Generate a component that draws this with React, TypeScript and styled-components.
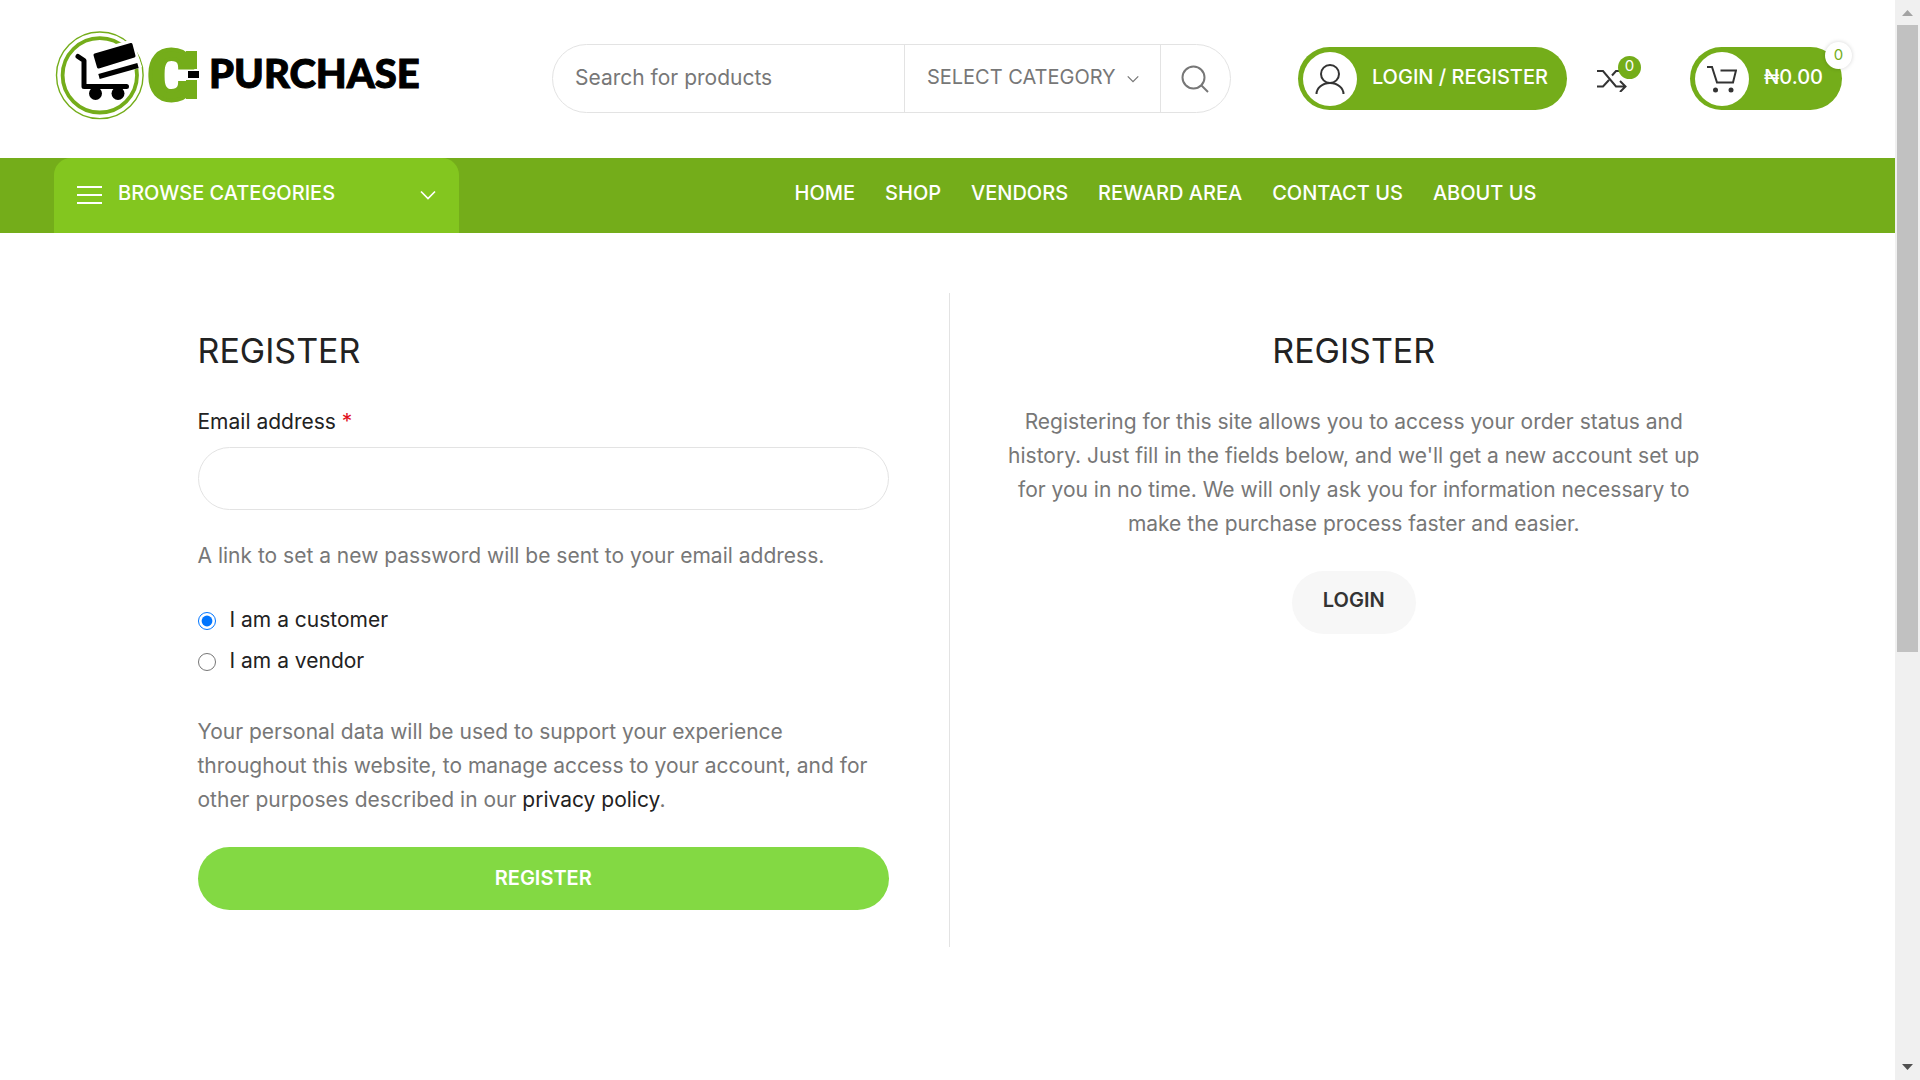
import React from "react";
import styled, { createGlobalStyle } from "styled-components";

const green = "#74ad1a";
const sans = `Inter, "Noto Sans", sans-serif`;

const GlobalStyle = createGlobalStyle`
  * { box-sizing: border-box; }
  html { overflow: hidden; }
  body { margin: 0; background: #fff; color: #777; font: 21px/34px ${sans}; }
  button, input, select { font: inherit; }
  a { color: inherit; text-decoration: none; }
  h2, p { margin: 0; }
  svg { display: block; flex: none; }
`;

const Page = styled.div`
  display: flex;
  height: 100vh;
`;

const Content = styled.div`
  flex: 1;
  min-width: 0;
  overflow: hidden;
`;

const Header = styled.header`
  display: flex;
  align-items: center;
  height: 158px;
  padding: 0 53px 1px 54px;
`;

const Logo = styled.a`
  flex: none;
  margin: 0 122px 8px 0;
`;

const Search = styled.form`
  display: flex;
  flex: 1;
  height: 69px;
  border: 1px solid #e3e3e3;
  border-radius: 35px;
  overflow: hidden;
`;

const SearchInput = styled.input`
  flex: 1;
  min-width: 0;
  padding: 0 22px 2px;
  border: 0;
  background: none;
  color: #777;
  outline: 0;
  &::placeholder { color: #777; opacity: 1; }
`;

const CategoryBox = styled.label`
  display: flex;
  align-items: center;
  width: 257px;
  padding: 0 21px 0 22px;
  border-left: 1px solid #e3e3e3;
  border-right: 1px solid #e3e3e3;
`;

const CategorySelect = styled.select`
  flex: 1;
  min-width: 0;
  padding: 0 0 4px;
  border: 0;
  appearance: none;
  background: none;
  color: #777;
  font-size: 20px;
`;

const SearchButton = styled.button`
  display: grid;
  place-items: center;
  width: 69px;
  padding: 0;
  border: 0;
  background: none;
`;

const Tools = styled.div`
  display: flex;
  align-items: center;
  margin-left: 67px;
`;

const Pill = styled.a`
  position: relative;
  display: flex;
  align-items: center;
  height: 63px;
  padding: 0 19px 4px 74px;
  border-radius: 32px;
  background: ${green};
  color: #fff;
  font-size: 20px;
  font-weight: 500;
  white-space: nowrap;
`;

const PillIcon = styled.span`
  position: absolute;
  left: 5px;
  top: 5px;
  display: grid;
  place-items: center;
  width: 54px;
  height: 54px;
  border-radius: 50%;
  background: #fff;
`;

const Compare = styled.a`
  position: relative;
  margin: 0 63px 0 30px;
`;

const Badge = styled.span<{ $light?: boolean }>`
  position: absolute;
  top: ${p => (p.$light ? "-5px" : "-10px")};
  right: ${p => (p.$light ? "-10px" : "-14px")};
  width: ${p => (p.$light ? 27 : 23)}px;
  height: ${p => (p.$light ? 27 : 23)}px;
  border-radius: 50%;
  background: ${p => (p.$light ? "#fff" : green)};
  color: ${p => (p.$light ? green : "#fff")};
  box-shadow: ${p => (p.$light ? "0 0 4px rgba(0, 0, 0, 0.17)" : "none")};
  font-size: 15px;
  font-weight: 400;
  line-height: ${p => (p.$light ? 25 : 20)}px;
  text-align: center;
`;

const NavBar = styled.div`
  display: flex;
  height: 75px;
  padding: 0 53px 0 54px;
  background: ${green};
  color: #fff;
  font-size: 20px;
  font-weight: 500;
`;

const Browse = styled.button`
  display: flex;
  align-items: center;
  gap: 16px;
  width: 405px;
  padding: 0 23px 2px;
  border: 0;
  border-radius: 17px 17px 0 0;
  background: #83c61f;
  color: #fff;
`;

const BrowseLabel = styled.span`
  flex: 1;
  padding-bottom: 4px;
  text-align: left;
`;

const Menu = styled.nav`
  display: flex;
  flex: 1;
  align-items: center;
  justify-content: center;
  gap: 30px;
  margin-left: 30px;
  padding-bottom: 5px;
  white-space: nowrap;
`;

const Main = styled.main`
  display: flex;
  max-width: 1504px;
  margin: 60px auto 0;
`;

const Column = styled.section`
  flex: 1;
  padding: 37px 0 37px 58px;
  border-left: 1px solid #e3e3e3;
  text-align: center;
  &:first-child {
    padding: 37px 60px 37px 2px;
    border-left: 0;
    text-align: left;
  }
`;

const Title = styled.h2`
  margin-bottom: 33px;
  color: #222;
  font-size: 34px;
  font-weight: 400;
  line-height: 42px;
`;

const FieldLabel = styled.label`
  display: block;
  margin-bottom: 8px;
  color: #222;
`;

const Required = styled.span`
  color: #e01020;
`;

const TextField = styled.input`
  display: block;
  width: 100%;
  height: 63px;
  margin-bottom: 29px;
  padding: 0 22px;
  border: 1px solid #e3e3e3;
  border-radius: 32px;
`;

const Choices = styled.fieldset`
  margin: 27px 0 33px;
  padding: 0;
  border: 0;
`;

const Choice = styled.label`
  display: flex;
  align-items: center;
  gap: 14px;
  height: 41px;
  color: #222;
`;

const ChoiceText = styled.span`
  padding-bottom: 2px;
`;

const Radio = styled.input`
  width: 18px;
  height: 18px;
  margin: 0;
  accent-color: #0075ff;
`;

const PolicyLink = styled.a`
  color: #222;
`;

const SubmitButton = styled.button`
  width: 100%;
  height: 63px;
  margin-top: 30px;
  padding: 0 0 2px;
  border: 0;
  border-radius: 32px;
  background: #83d943;
  color: #fff;
  font-size: 20px;
  font-weight: 600;
`;

const LoginLink = styled.a`
  display: inline-block;
  height: 63px;
  margin-top: 30px;
  padding: 0 31px;
  border-radius: 32px;
  background: #f7f7f7;
  color: #333;
  font-size: 20px;
  font-weight: 600;
  line-height: 59px;
`;

const Scrollbar = styled.div`
  display: flex;
  flex-direction: column;
  justify-content: space-between;
  align-items: center;
  width: 25px;
  background: #f0f0f0;
`;

const Thumb = styled.div`
  width: 21px;
  height: 627px;
  margin: 9px 0 auto;
  background: #c1c1c1;
`;

const Chevron = ({ size, color }: { size: number; color: string }) => (
  <svg width={size} height={size} viewBox="0 0 16 16" fill="none" stroke={color} strokeWidth="1.7">
    <path d="M1 4.5 8 11.5 15 4.5" />
  </svg>
);

const LogoArt = () => (
  <svg width="376" height="92" viewBox="54 28 376 92">
    <g fill="none" stroke={green}>
      <circle cx="99.8" cy="74.3" r="43.3" strokeWidth="1.4" />
      <circle cx="99.8" cy="74.3" r="37.2" strokeWidth="3.8" />
    </g>
    <path d="M92 50 133 38 142 66 100 80Z" fill="#fff" />
    <g stroke="#000" strokeLinejoin="round" strokeLinecap="round">
      <path d="M78 55.500 84 59.500V85.500H126.500" fill="none" strokeWidth="5" />
      <path d="M95 54 131 43.500 134 55 98.500 66Z" strokeWidth="3" />
      <path d="M99 75.500 138 64.500" fill="none" strokeWidth="5" strokeLinecap="butt" />
    </g>
    <circle cx="95.500" cy="92.500" r="6.500" />
    <circle cx="118" cy="92.500" r="6.500" />
    <text x="148" y="99" fill={green} stroke={green} strokeWidth="4" fontFamily="Roboto" fontWeight="900" fontSize="70">C</text>
    <path d="M186 50H197V68H186ZM186 79H197V98H186Z" fill={green} />
    <rect x="187.500" y="69.500" width="12" height="8" stroke="#fff" />
    <text x="209" y="87" fill="#000" stroke="#000" strokeWidth="1" fontFamily="Lato" fontWeight="900" fontSize="40">PURCHASE</text>
  </svg>
);

const menu = ["HOME", "SHOP", "VENDORS", "REWARD AREA", "CONTACT US", "ABOUT US"];

export default function App() {
  return (
    <Page>
      <GlobalStyle />
      <Content>
        <Header>
          <Logo href="#" aria-label="C-Purchase"><LogoArt /></Logo>
          <Search onSubmit={e => e.preventDefault()}>
            <SearchInput type="text" placeholder="Search for products" aria-label="Search for products" />
            <CategoryBox>
              <CategorySelect aria-label="Category"><option>SELECT CATEGORY</option></CategorySelect>
              <Chevron size={12} color="#777" />
            </CategoryBox>
            <SearchButton aria-label="Search">
              <svg width="28" height="28" viewBox="0 0 28 28" fill="none" stroke="#777" strokeWidth="2">
                <circle cx="12.500" cy="12.500" r="11" /><path d="M20.500 20.500 27 27" />
              </svg>
            </SearchButton>
          </Search>
          <Tools>
            <Pill href="#">
              <PillIcon>
                <svg width="30" height="30" viewBox="0 0 30 30" fill="none" stroke="#333" strokeWidth="2">
                  <circle cx="15" cy="10" r="9" /><path d="M1.500 30a13.500 11 0 0 1 27 0" />
                </svg>
              </PillIcon>
              LOGIN / REGISTER
            </Pill>
            <Compare href="#" aria-label="Compare">
              <svg width="30" height="26" viewBox="0 0 30 26" fill="none" stroke="#333" strokeWidth="2">
                <path d="M0 5H6L19 20.500H28M0 20.500H6L12 14M15 9.500 19 5H28M23 15 28.500 20.500 23 26" />
              </svg>
              <Badge>0</Badge>
            </Compare>
            <Pill href="#">
              <PillIcon>
                <svg width="30" height="28" viewBox="0 0 30 28" fill="none" stroke="#333" strokeWidth="2">
                  <path d="M0 2H5L10 17.500H26L29 5.500H13.500" />
                  <circle cx="8.500" cy="25" r="2.500" fill="#333" stroke="none" />
                  <circle cx="24" cy="25" r="2.500" fill="#333" stroke="none" />
                </svg>
              </PillIcon>
              ₦0.00
              <Badge $light>0</Badge>
            </Pill>
          </Tools>
        </Header>
        <NavBar>
          <Browse>
            <svg width="25" height="20" viewBox="0 0 25 20" stroke="#fff" strokeWidth="2"><path d="M0 2H25M0 10H25M0 18H25" /></svg>
            <BrowseLabel>BROWSE CATEGORIES</BrowseLabel>
            <Chevron size={16} color="#fff" />
          </Browse>
          <Menu>{menu.map(m => <a href="#" key={m}>{m}</a>)}</Menu>
        </NavBar>
        <Main>
          <Column>
            <Title>REGISTER</Title>
            <form onSubmit={e => e.preventDefault()}>
              <FieldLabel htmlFor="email">Email address <Required>*</Required></FieldLabel>
              <TextField id="email" type="email" />
              <p>A link to set a new password will be sent to your email address.</p>
              <Choices>
                <Choice><Radio type="radio" name="role" defaultChecked /><ChoiceText>I am a customer</ChoiceText></Choice>
                <Choice><Radio type="radio" name="role" /><ChoiceText>I am a vendor</ChoiceText></Choice>
              </Choices>
              <p>
                Your personal data will be used to support your experience throughout this website, to manage
                access to your account, and for other purposes described in our{" "}
                <PolicyLink href="#">privacy policy</PolicyLink>.
              </p>
              <SubmitButton>REGISTER</SubmitButton>
            </form>
          </Column>
          <Column>
            <Title>REGISTER</Title>
            <p>
              Registering for this site allows you to access your order status and history. Just fill in the
              fields below, and we'll get a new account set up for you in no time. We will only ask you for
              information necessary to make the purchase process faster and easier.
            </p>
            <LoginLink href="#">LOGIN</LoginLink>
          </Column>
        </Main>
      </Content>
      <Scrollbar aria-hidden="true">
        <svg width="25" height="16" viewBox="0 0 25 16"><path d="M7 16 12.500 10 18 16Z" fill="#a3a3a3" /></svg>
        <Thumb />
        <svg width="25" height="16" viewBox="0 0 25 16"><path d="M7 0 12.500 6 18 0Z" fill="#505050" /></svg>
      </Scrollbar>
    </Page>
  );
}
